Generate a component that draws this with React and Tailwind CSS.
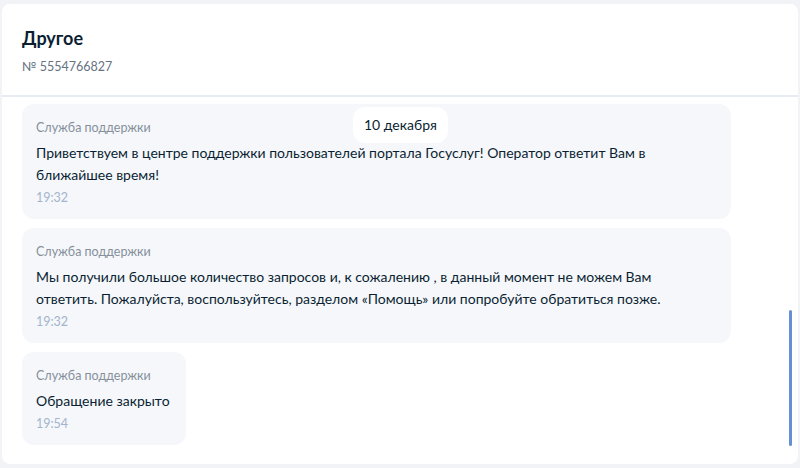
import React from 'react';

const messages = [
  {
    id: 1,
    author: 'Служба поддержки',
    text: 'Приветствуем в центре поддержки пользователей портала Госуслуг! Оператор ответит Вам в ближайшее время!',
    time: '19:32',
  },
  {
    id: 2,
    author: 'Служба поддержки',
    text: 'Мы получили большое количество запросов и, к сожалению , в данный момент не можем Вам ответить. Пожалуйста, воспользуйтесь, разделом «Помощь» или попробуйте обратиться позже.',
    time: '19:32',
  },
  {
    id: 3,
    author: 'Служба поддержки',
    text: 'Обращение закрыто',
    time: '19:54',
  },
];

const Message = ({ message }) => (
  <div className="self-start rounded-[12px] bg-[#f5f7fa] pl-[14px] pr-[16px] pt-[16px] pb-[13px]">
    <div className="text-[12.5px] leading-[16px] text-[#86909c]">{message.author}</div>
    <div className="mt-[6px] text-[14px] leading-[22px] text-[#0b1f33]">{message.text}</div>
    <div className="mt-[4px] text-[12.5px] leading-[16px] text-[#a3b4cc]">{message.time}</div>
  </div>
);

export default function App() {
  return (
    <div
      className="h-[468px] w-[800px] overflow-hidden bg-[#f1f3f7] pl-[2px] pr-[2px] pt-[4px]"
      style={{ fontFamily: 'Lato, "Noto Sans", sans-serif' }}
    >
      <div className="relative h-[460px] overflow-hidden rounded-[8px] bg-white">
        <div className="h-[91px] px-[20px] pt-[22px]">
          <div className="text-[18px] font-bold leading-[24px] text-[#0b1f33]">Другое</div>
          <div className="mt-[9px] text-[12.5px] leading-[16px] text-[#66727f]">№ 5554766827</div>
        </div>
        <div className="h-[2px] bg-[#e6ebf3]" />

        {/* message list */}
        <div className="flex flex-col gap-[9px] pl-[20px] pr-[67px] pt-[7px]">
          {messages.map((m) => (
            <Message key={m.id} message={m} />
          ))}
        </div>

        {/* sticky date label */}
        <div className="absolute left-[351px] top-[103px] rounded-[12px] bg-white px-[11px] py-[8px] text-[14px] leading-[20px] text-[#0b1f33]">
          10 декабря
        </div>

        {/* scrollbar */}
        <div className="absolute left-[787px] top-[306px] h-[136px] w-[3px] rounded-full bg-[#6690d6]" />
      </div>
    </div>
  );
}
